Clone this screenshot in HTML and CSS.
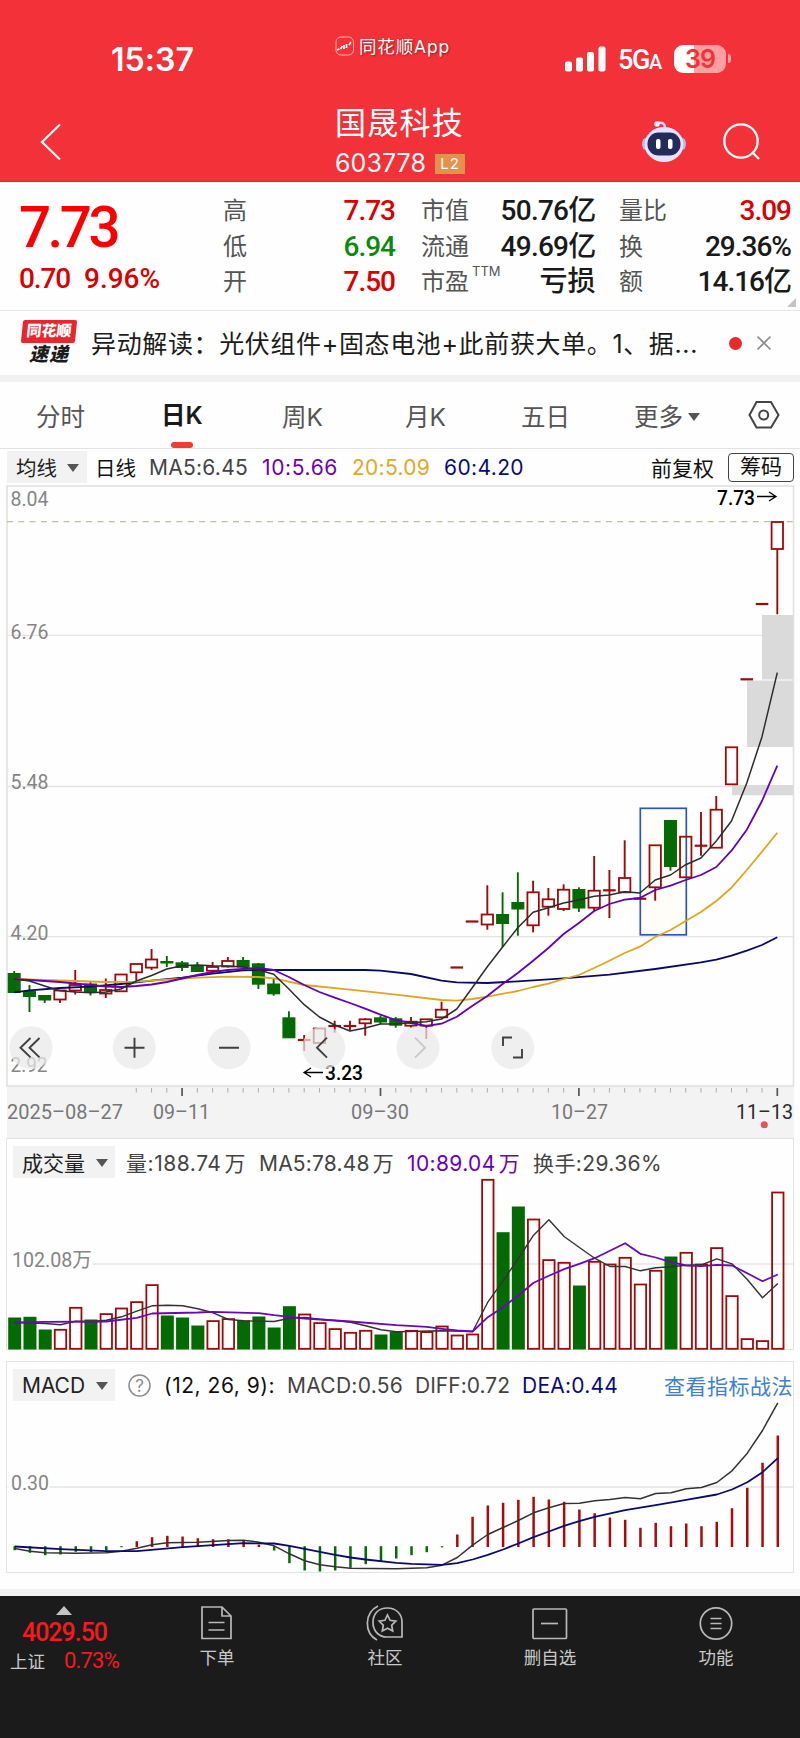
FILE: index.html
```html
<!DOCTYPE html>
<html lang="zh-CN">
<head>
<meta charset="utf-8">
<title>国晟科技 603778</title>
<link rel="stylesheet" href="styles.css">
</head>
<body>
<header class="top">
  <div class="status">
    <span class="time" data-w="83">15:37</span>
    <div class="brand">
      <svg width="20" height="20" viewBox="0 0 20 20" fill="none" stroke="#fff"><rect x="1" y="1" width="17.5" height="18" rx="5" stroke="#ffb3a8"/><path d="M2 14l2.500-1M5.500 13l2-3M9 9v4M11.500 8v4M14 9l2-3" stroke-width="1.700"/></svg>
      <span data-w="91">同花顺App</span>
    </div>
    <svg class="signal" width="41" height="26" viewBox="0 0 41 26" fill="#fff"><rect y="15.500" width="7" height="10" rx="2"/><rect x="11" y="11.500" width="7" height="14" rx="2"/><rect x="22" y="6" width="7" height="19.500" rx="2"/><rect x="33.500" y="0.500" width="7" height="25" rx="2"/></svg>
    <span class="net"><b data-w="31">5G</b><b class="net-a">A</b></span>
    <span class="battery"><b>39</b><i></i></span>
  </div>
  <div class="nav">
    <svg class="back" width="22" height="38" viewBox="0 0 22 38" fill="none" stroke="#fff" stroke-width="2.200"><path d="M20 1.500L2 19l18 17.500"/></svg>
    <div class="title">
      <h1 data-w="129">国晟科技</h1>
      <p><span data-w="91">603778</span><b>L2</b></p>
    </div>
    <svg class="robot" width="46" height="44" viewBox="0 0 46 44"><path d="M17 3c5-1 7 1 7 5" fill="none" stroke="#dcd9ff" stroke-width="2.500"/><circle cx="16" cy="4" r="2.800" fill="#f4efff"/><ellipse cx="4.500" cy="24" rx="3.500" ry="6" fill="#b8b4f5"/><ellipse cx="41.500" cy="24" rx="3.500" ry="6" fill="#b8b4f5"/><ellipse cx="23" cy="24.500" rx="19.500" ry="17.500" fill="#e3e2ff"/><rect x="6.500" y="12.500" width="33" height="23" rx="11" fill="#232b5b"/><rect x="15" y="19" width="4.500" height="10" rx="2" fill="#fff"/><rect x="27" y="19" width="4.500" height="10" rx="2" fill="#fff"/></svg>
    <svg class="search" width="38" height="38" viewBox="0 0 38 38" fill="none" stroke="#fff" stroke-width="2.300"><circle cx="18" cy="18" r="16.700"/><path d="M29 29l7 7"/></svg>
  </div>
</header>

<section class="quote">
  <div class="price"><strong data-w="98">7.73</strong><p><span data-w="51">0.70</span><span data-w="76">9.96%</span></p></div>
  <dl class="c1"><dt>高</dt><dd class="up">7.73</dd><dt>低</dt><dd class="down">6.94</dd><dt>开</dt><dd class="up">7.50</dd></dl>
  <dl class="c2"><dt>市值</dt><dd data-w="95">50.76亿</dd><dt>流通</dt><dd data-w="95">49.69亿</dd><dt class="pe">市盈<sup>TTM</sup></dt><dd data-w="56">亏损</dd></dl>
  <dl class="c3"><dt>量比</dt><dd class="up">3.09</dd><dt>换</dt><dd>29.36%</dd><dt>额</dt><dd>14.16亿</dd></dl>
  <i class="corner"></i>
</section>

<section class="news">
  <div class="badge"><b>同花顺</b><em>速递</em></div>
  <p data-w="607">异动解读：光伏组件+固态电池+此前获大单。1、据...</p>
  <i class="dot"></i>
  <svg width="16" height="16" viewBox="0 0 16 16" stroke="#8a8a8a" stroke-width="1.600"><path d="M1.500 1.500l13 13M14.500 1.500l-13 13"/></svg>
</section>

<nav class="tabs">
  <span class="t1">分时</span><span class="t2">日K</span><span class="t3">周K</span><span class="t4">月K</span><span class="t5">五日</span><span class="t6">更多<i class="tri"></i></span>
  <svg width="32" height="30" viewBox="0 0 32 30" fill="none" stroke="#444" stroke-width="2"><path d="M8.500 2h14.500l7.500 13-7.500 12.500H8.500L1.500 15z"/><circle cx="15.700" cy="15" r="4.500"/></svg>
</nav>

<div class="legend ma">
  <span class="pick p1">均线<i class="tri"></i></span>
  <span class="black name">日线</span>
  <span data-w="99">MA5:6.45</span>
  <span data-w="76" class="violet">10:5.66</span>
  <span data-w="78" class="gold">20:5.09</span>
  <span data-w="80" class="navy">60:4.20</span>
  <span class="black adj">前复权</span><span class="chips">筹码</span>
</div>

<svg id="kline" class="chart" width="800" height="653" viewBox="0 485 800 653"></svg>

<section class="panel volume">
  <div class="legend">
    <span class="pick p2">成交量<i class="tri"></i></span>
    <span data-w="120">量:188.74<i class="thin"></i>万</span><span data-w="135">MA5:78.48<i class="thin"></i>万</span><span data-w="113" class="violet">10:89.04<i class="thin"></i>万</span><span data-w="129">换手:29.36%</span>
  </div>
  <svg id="volume" width="787" height="172" viewBox="6.500 1179.500 787 172"></svg>
</section>

<section class="panel macd">
  <div class="legend">
    <span class="pick p3"><span data-w="63">MACD</span><i class="tri"></i></span>
    <svg class="help" width="23" height="23" viewBox="0 0 23 23"><circle cx="11.500" cy="11.500" r="10.500" fill="none" stroke="#8b8b8b" stroke-width="1.500"/><text x="11.500" y="17.500" text-anchor="middle" font-size="17" fill="#8b8b8b">?</text></svg>
    <span data-w="111" class="black">(12, 26, 9):</span><span data-w="116">MACD:0.56</span><span data-w="95">DIFF:0.72</span><span data-w="96" class="navy">DEA:0.44</span><span class="link" data-w="129">查看指标战法</span>
  </div>
  <svg id="macd" width="787" height="172" viewBox="6.500 1402.500 787 172"></svg>
</section>

<div class="gap"></div>
<footer class="bar">
  <div class="index"><i></i><b data-w="85">4029.50</b><p>上证<span data-w="55">0.73%</span></p></div>
  <div class="item i1"><svg width="34" height="36" viewBox="0 0 34 36"><path d="M2 2h20l9 9v22.500H2zM22 2v9h9M8.500 17.500h16M8.500 25h16"/></svg>下单</div>
  <div class="item i2"><svg width="38" height="36" viewBox="0 0 38 36"><path d="M21.500 3C11 3 7 10 7 17.500S12 32 21 32h15V17C36 9 30 3 21.500 3zM12 1C-2 8-2 28 11 35M21.500 10l2.600 5.300 5.700.8-4.100 4.100 1 5.800-5.200-2.700-5.200 2.700 1-5.800-4.100-4.100 5.700-.8z"/></svg>社区</div>
  <div class="item i3"><svg width="36" height="36" viewBox="0 0 36 36"><rect x="1" y="4" width="33.500" height="29.500" rx="1"/><path d="M9 18.500h17"/></svg>删自选</div>
  <div class="item i4"><svg width="36" height="36" viewBox="0 0 36 36"><circle cx="18" cy="18.500" r="15.700"/><path d="M12.500 13.500h11M12.500 18.500h11M12.500 23.500h11"/></svg>功能</div>
</footer>
<script src="charts.js"></script>
</body>
</html>
```
FILE: styles.css
```css
* { box-sizing: border-box; }
body { margin: 0; width: 800px; background: #fefefe; color: #444; font-family: Inter, "Noto Sans CJK SC", sans-serif; }
h1, p, dl, dt, dd { margin: 0; font-weight: 400; }
svg { display: block; flex: none; }
[data-w] { white-space: nowrap; display: inline-block; flex: none; }

.top { height: 182px; background: #f23238; color: #fff; border-bottom: 1px solid #d0283a; }
.status { height: 98px; padding: 20px 0 0 111px; display: flex; align-items: center; }
.time { width: 83px; font-size: 32px; font-weight: 600; }
.brand { margin: 0 0 27px 141px; width: 230px; display: flex; align-items: center; gap: 4px; font-size: 17.5px; text-shadow: 1px 1px 2px #0006; }
.net { width: 44px; margin-left: 12px; display: flex; align-items: baseline; font: 500 27px Roboto, sans-serif; padding-top: 2px; }
.net b { font-weight: 500; }
.net .net-a { font-size: 20px; }
.battery { margin-left: 12px; width: 52px; height: 28px; border-radius: 9px; background: linear-gradient(90deg, #fff 39%, #ffa0a0 39%); color: #f23238; font-size: 25px; line-height: 28px; text-align: center; position: relative; }
.battery b { font-weight: 600; letter-spacing: -1px; }
.battery i { position: absolute; left: 53.5px; top: 9px; width: 3px; height: 9px; border-radius: 0 4px 4px 0; background: #ffa0a0; }
.nav { height: 83px; display: flex; align-items: flex-start; }
.back { margin: 25px 0 0 40px; }
.title { margin: 5px 0 0 273px; width: 305px; }
.title h1 { font-size: 31px; line-height: 40px; }
.title p { display: flex; align-items: center; height: 39px; font-size: 25px; gap: 9px; }
.title b { width: 30px; height: 20px; margin-top: 2px; background: #e5914b; font-size: 15px; line-height: 20px; font-weight: 400; text-align: center; letter-spacing: 1px; }
.robot { margin: 22px 0 0 1px; }
.search { margin: 25px 0 0 36px; }

.quote { height: 129px; border-bottom: 1px solid #e6e6e6; display: flex; position: relative; }
.price { width: 223px; padding: 15px 0 0 19px; font-family: Roboto, sans-serif; color: #fa0000; }
.price strong { height: 63px; font-size: 56.5px; line-height: 63px; font-weight: 500; }
.price p { height: 36px; display: flex; gap: 14px; font-size: 28px; line-height: 38px; color: #d80000; font-weight: 500; }
.quote dl { display: grid; grid-template-columns: auto 1fr; grid-auto-rows: 35.5px; padding-top: 11px; line-height: 36px; }
.quote dt { font-size: 24px; color: #555; white-space: nowrap; }
.quote dd { justify-self: end; font-family: Roboto, "Noto Sans CJK SC", sans-serif; font-size: 28px; font-weight: 500; letter-spacing: -1px; text-align: right; color: #1a1a1a; white-space: nowrap; }
.quote .up { color: #d80000; }
.quote .down { color: #0c8a0c; }
.c1 { width: 172px; }
.c2 { width: 172px; margin-left: 26px; }
.c3 { width: 172px; margin-left: 26px; }
.pe sup { font-size: 13px; line-height: 0; vertical-align: 14px; margin-left: 3px; letter-spacing: 0; }
.corner { position: absolute; right: 4px; bottom: 3px; border-left: 9px solid transparent; border-bottom: 9px solid #c4c4c4; }

.news { height: 71px; border-bottom: 7px solid #f1f1f1; padding-left: 22px; display: flex; align-items: center; color: #1c1c1c; font-size: 25px; }
.news p { padding-bottom: 3px; }
.badge { width: 54px; height: 46px; margin-right: 15px; text-align: center; }
.badge b { display: block; height: 23px; font-size: 15px; line-height: 22px; font-weight: 900; color: #fff; background: #e8262c; border-radius: 2px; transform: skewX(-6deg); }
.badge em { display: block; font-size: 19px; line-height: 23px; font-weight: 900; letter-spacing: 1px; }
.dot { width: 13px; height: 13px; border-radius: 50%; background: #ee2828; margin: 0 14px 0 31px; }

.tabs { height: 67px; border-bottom: 1px solid #e2e2e2; padding-left: 36px; display: flex; align-items: center; font-size: 24.5px; color: #555; white-space: nowrap; }
.tri { display: inline-block; border: 6px solid transparent; border-top: 8px solid #555; border-bottom: 0; }
.t1 { width: 125px; }
.t2 { width: 121px; height: 66px; line-height: 66px; font-weight: 600; color: #1a1a1a; position: relative; }
.t2::after { content: ""; position: absolute; left: 10px; bottom: 0; width: 22px; height: 6px; border-radius: 3px; background: #f03c32; }
.t3 { width: 123px; }
.t4 { width: 116px; }
.t5 { width: 113px; }
.t6 { width: 114px; }
.t6 .tri { margin-left: 5px; vertical-align: 5px; }

.legend { display: flex; align-items: center; font-size: 21px; color: #444; white-space: nowrap; }
.thin { display: inline-block; width: 3px; }
.pick { display: flex; align-items: center; height: 32px; background: #f2f2f2; color: #222; }
.pick .tri { margin: 2px 0 0 auto; }
.p1 { width: 80px; padding: 0 8px 0 9px; font-size: 20.500px; }
.p2, .p3 { width: 102px; padding: 0 7px 0 9px; }
.black { color: #111; }
.violet { color: #6a00b8; }
.gold { color: #e2a81e; }
.navy { color: #0b0b78; }
.ma { height: 36px; padding: 0 6px 0 7px; gap: 14px; }
.ma .name { margin: 0 -1px 0 -6px; font-size: 20.500px; }
.adj { margin-left: auto; }
.chips { width: 66px; height: 29px; border: 1px solid #444; border-radius: 4px; color: #111; font-size: 21px; line-height: 26px; text-align: center; }

.chart { font-family: Roboto, sans-serif; }
.panel { width: 788px; margin-left: 6px; border: 1.5px solid #e3e3e3; height: 212px; }
.panel svg { overflow: visible; }
.panel .legend { height: 40px; padding: 6px 0 0 6px; gap: 12px; }
.volume .legend { gap: 13px; }
.panel .pick { margin-right: -2px; }
.macd { margin-top: 11px; }
.help { margin: 0 1px 0 3px; }
.link { margin-left: auto; color: #3d80cf; }
.gap { margin-top: 16px; height: 7px; background: #f2f2f2; }

.bar { height: 142px; background: #1b1b1b; display: flex; color: #c9c9c9; font-size: 17.500px; }
.index { width: 176px; padding: 10px 0 0 10px; }
.index i { display: block; width: 0; margin-left: 46px; border: 8px solid transparent; border-bottom: 9px solid #c4c4c4; border-top: 0; }
.index b { display: block; margin: 4px 0 0 12px; font: 500 25px/28px Roboto, sans-serif; color: #f31b1b; }
.index p { line-height: 30px; display: flex; gap: 19px; }
.index p span { font: 400 22px/28px Roboto, sans-serif; color: #f31b1b; }
.item { display: flex; flex-direction: column; align-items: center; padding-top: 9px; line-height: 33px; }
.item svg { fill: none; stroke: #b9b9b9; stroke-width: 1.700; }
.i1 { width: 82px; }
.i2 { width: 82px; margin-left: 86px; }
.i3 { width: 82px; margin-left: 83px; }
.i4 { width: 82px; margin-left: 84px; }
```
FILE: charts.js
```js
const STEP = 15.262, X0 = 14.2, x = i => X0 + i * STEP;
const RED = '#9c0b0b', GREEN = '#046a04';
const rect = (a, b, w, h, attrs) => `<rect x="${a}" y="${b}" width="${w}" height="${h}" ${attrs}/>`;
const seg = (x1, y1, x2, y2, c, w, extra = '') => `<line x1="${x1}" y1="${y1}" x2="${x2}" y2="${y2}" stroke="${c}" stroke-width="${w}" ${extra}/>`;
const label = (s, a, b, w, attrs) => `<text x="${a}" y="${b}" textLength="${w}" lengthAdjust="spacingAndGlyphs" ${attrs}>${s}</text>`;
// A line is given as [index, y] pairs, flattened.
const curve = (d, c, w = 1.8) => {
  let pts = [];
  for (let k = 0; k < d.length; k += 2) pts.push(x(d[k]).toFixed(1) + ',' + d[k + 1]);
  return `<polyline points="${pts.join(' ')}" fill="none" stroke="${c}" stroke-width="${w}" stroke-linejoin="round"/>`;
};
const series = (start, list) => list.flatMap((v, k) => [start + k, v]);
const grid = y => seg(7, y, 793, y, '#e4e4e4', 1.3);

// kind, body top, body bottom, high, low
const candles = [
 'g',973,993,971,993,'g',991,997,985,1012,'g',995,1000.5,995,1003,'r',990.5,999.5,990,1003,'r',985,990.5,970,994.5,
 'g',983.5,992.5,982,995.5,'r',990,993.5,978.5,998,'r',974.5,991.3,974,991,'r',964,972.3,964,980.5,'r',959.5,967.6,949,970,
 'g',961,963.5,956,967,'g',962.3,968,961,971,'g',965,972,962,972,'r',967,970.7,962,973.5,'r',961,966.5,957,967.5,
 'g',960,967.5,957,967,'g',963.3,984.7,963,989,'g',983.5,994.3,978,995.7,'g',1017.3,1038.3,1011.3,1038,'d',1040,1040,1035,1051,
 'r',1028.5,1043,1028,1043,'d',1026,1026,1020.7,1032.7,'d',1026,1026,1020.7,1030.5,'r',1019.3,1023.3,1018,1035.7,'g',1017.3,1022.5,1015.5,1024,
 'g',1018.3,1025.7,1017,1027.7,'r',1021.7,1025.7,1017,1027.7,'r',1019.3,1025.7,1019,1039,'r',1009.7,1017.3,1001.7,1018,'d',967.5,967.5,967,968,
 'd',921.5,921.5,921,922,'r',914.5,924.5,885.3,929.7,'g',914,924,892.3,947,'g',902,909.5,872.3,935.7,'r',892.3,925.3,880.7,932.3,
 'r',899.3,906.7,888,915.7,'r',889.7,909,884.3,911,'g',889,908.5,887.3,912,'r',890.7,907.7,856,911.7,'d',890.3,890.3,870,918,
 'r',878,892.3,840.3,892,'d',898.7,898.7,898,899,'r',845.3,887.3,845,900.7,'g',820,867,820,870.7,'r',836.7,877.3,836,877,
 'd',845.7,845.7,812,855.7,'r',809.7,847.7,796,848,'r',747.3,784.3,747,784,'d',679.3,679.3,679,680,'d',604,604,603.5,604.5,'r',522,549,522,614.3];

function drawKline() {
  let s = rect(7, 1086, 787, 52, 'fill="#f3f3f3"') + rect(7, 486, 786.5, 600, 'fill="#fefefe" stroke="#e0e0e0" stroke-width="1.5"');
  s += [635.3, 786.5, 936.7].map(grid).join('');
  s += seg(7, 521.7, 793, 521.7, '#bfbfa0', 1.2, 'stroke-dasharray="6 5.3"');
  s += rect(762, 615, 31, 64.5, 'fill="#dadada"') + rect(747, 680.5, 46, 66.5, 'fill="#dadada"') + rect(732, 785, 61, 10.3, 'fill="#dadada"');
  s += rect(640.3, 808.3, 46, 126.5, 'fill="#fefdf8" stroke="#2a56b5" stroke-width="1.7"');
  const axis = 'font-size="20" fill="#858585"';
  s += label('8.04', 10.5, 506, 38, axis) + label('6.76', 10.5, 638.5, 38, axis) + label('5.48', 10.5, 789, 38, axis) + label('4.20', 10.5, 940, 38, axis) + label('2.92', 10.5, 1072, 37, axis);
  for (let i = 0; i < 51; i++) {
    const [k, t, b, h, l] = candles.slice(i * 5, i * 5 + 5), cx = x(i), c = k === 'g' ? GREEN : RED;
    if (k === 'g') s += rect(cx - 6.5, t, 13, b - t, `fill="${c}"`) + seg(cx, h, cx, l, c, 1.9);
    else if (k === 'd') s += seg(cx - 6.3, t, cx + 6.3, t, c, 2.2) + seg(cx, h, cx, l, c, 1.9);
    else {
      s += seg(cx, h, cx, t, c, 1.9) + seg(cx, b, cx, l, c, 1.9);
      s += rect(cx - 5.7, t, 11.4, b - t, `fill="none" stroke="${c}" stroke-width="1.8"`);
    }
  }
  s += curve([0,992.3,1,990.3,3,988,5,986.7,7,984,9,980.7,11,977.7,13,973.7,15,970.3,17,970,23,970,24,970.7,26,974,28,980.7,29,982.3,31,983,33,981.3,36,978.3,39,974.7,42,969,45,962.3,46,959.7,47,955.7,48,950.7,49,945,50,937.3], '#0a0a62');
  s += curve([0,979,4,981,6,982,8,981.7,10,979.7,12,977.7,14,976.7,16,977,17,978.3,19,985,22,989.7,25,994.7,28,1000,29,1000.7,30,999,31,996.7,33,991,34,987,35,983.7,36,979,37,975,38,968,39,960.7,40,953,41,946.7,42,937,43,930,44,921,45,912,46,901,47,887.7,48,870,49,851.7,50,832.7], '#e0a51e');
  s += curve(series(0, [979,980,981,982,983.5,985,986.5,987,986,984.5,982,978.5,975,972,970,969,968,970,977,985,992,997.7,1003,1008.7,1014.7,1020,1023,1026,1023.7,1016.7,1006,996,984,973,960.7,948,934,923,911,904,899.7,898,890,885.7,880,875,867,850.7,829.7,801,765.7]), '#6202b4');
  s += curve(series(0, [979,981,986,990.7,992,992.7,992,989,981,975.5,969,965.7,965,965.7,966,967,970,974.3,989,1004.7,1017,1025,1031,1028,1024,1024,1022.7,1021.7,1019,1009,988,966.7,947,927.7,912.3,907.7,903,900,896.3,895,891.7,893,880,875,864.7,858,841,821,783,736.7,672.7]), '#2c2c2c', 1.5);
  const note = 'font-size="20" font-weight="500" fill="#000"';
  s += label('7.73', 717, 505, 38, note) + '<path d="M757 496.500h18M769 492l7 4.500-7 4.500" fill="none" stroke="#000" stroke-width="1.300"/>';
  s += label('3.23', 325, 1080, 38, note) + '<path d="M323 1072.500h-18M311 1068l-7 4.500 7 4.500" fill="none" stroke="#000" stroke-width="1.300"/>';
  // Zoom and pan controls.
  for (const cx of [31, 134.3, 229, 323.7, 418, 512.7]) s += `<circle cx="${cx}" cy="1047.700" r="21.500" fill="#e9e9e9" fill-opacity=".72"/>`;
  s += '<g fill="none" stroke="#3f3f3f" stroke-width="1.900"><path d="M30.500 1038l-10 9.700 10 9.700M39.500 1038l-10 9.700 10 9.700M124.500 1047.700h20M134.500 1037.700v20M219 1047.700h20M327 1037.700l-10 10 10 10M503 1046v-8.500h9M522 1049v8.500h-9"/><path d="M415 1037.700l10 10-10 10" stroke="#c8c8c8"/></g>';
  for (let i = 8; i < 51; i++) s += (i === 11 || i === 24 || i === 37 || i === 50) ? seg(x(i), 1088, x(i), 1096, '#555', 1.7) : seg(x(i), 1088, x(i), 1092.5, '#aaa', 1);
  const day = 'font-size="20.500" fill="#777"';
  s += label('2025–08–27', 7, 1119, 116, day) + label('09–11', 153, 1119, 57, day) + label('09–30', 351, 1119, 58, day) + label('10–27', 551, 1119, 57, day) + label('11–13', 736, 1119, 57, 'font-size="20.500" fill="#2a2a2a"');
  s += '<circle cx="764.300" cy="1124.700" r="3.500" fill="#e8505b"/>';
  document.getElementById('kline').innerHTML = s;
}

const volTop = [1318,1317.3,1330,1330,1308,1320,1314.3,1308.7,1302.3,1285.3,1316,1318,1326,1321.3,1319.3,1321,1317,1328,1306.7,1314.7,1323.3,1329.3,1333,1331,1335,1332.3,1331,1332.3,1326.7,1335.7,1334.7,1180,1232.7,1207,1219.7,1260.3,1263,1286,1262,1264.7,1258,1284.7,1271,1257,1253,1264.7,1248.3,1296.3,1339.3,1341.3,1192.7];
const volGreen = new Set([0,1,2,5,10,11,12,15,16,17,18,24,25,32,33,37,43]);
function drawVolume() {
  let s = grid(1264.5);
  s += '<rect x="8" y="1250" width="84" height="20" fill="#fefefe"/>' + label('102.08万', 11.5, 1267, 80, 'font-size="20.500" fill="#858585" font-family="Roboto, \'Noto Sans CJK SC\'"');
  volTop.forEach((t, i) => {
    s += volGreen.has(i) ? rect(x(i) - 6.5, t, 13, 1350 - t, `fill="${GREEN}"`) : rect(x(i) - 5.7, t + .3, 11.4, 1349 - t, `fill="none" stroke="${RED}" stroke-width="1.8"`);
  });
  s += curve([0,1323,2,1324,3,1325.3,4,1321.7,5,1322,6,1320.7,7,1317.3,8,1311.7,9,1306.3,10,1305.7,11,1306.3,12,1309.3,13,1313.3,14,1320,15,1321.3,17,1322,18,1318.7,19,1318,20,1319.7,21,1321,22,1322.7,23,1326.3,24,1330.3,25,1332.3,28,1331.3,30,1332,31,1302.7,32,1281.3,33,1259,34,1235.7,35,1220.3,36,1237,37,1248,38,1258.7,39,1267,40,1267,41,1271.3,42,1268.3,43,1267.3,44,1265.7,45,1265.3,46,1259.3,47,1264.3,48,1280,49,1298.3,50,1284], '#333', 1.4);
  s += curve([0,1323,2,1322.3,6,1322,8,1318.3,9,1314,12,1313,13,1312.3,16,1313.7,17,1315.7,18,1317.3,19,1319,22,1322,25,1325.7,27,1327.3,28,1329.3,29,1331,30,1332,31,1317.7,32,1307.7,33,1296,34,1283.3,35,1276.3,36,1269.7,37,1264.3,38,1258.7,39,1251.3,40,1243.7,41,1254.3,42,1258,43,1262.7,44,1266,45,1266.7,46,1265.3,47,1266,48,1273.7,49,1281.7,50,1275], '#6a08b5');
  document.getElementById('volume').innerHTML = s;
}

const macdEnd = [1550.7,1553.3,1555.7,1555,1552.3,1552.7,1551,1547.7,1541.7,1537.7,1536.3,1537,1538.7,1539.7,1539.7,1541,1545.3,1551,1563.7,1571,1572,1571,1568.3,1564.7,1561.7,1559,1555.7,1552.7,1547.9,1535,1517.3,1506,1503.3,1500.3,1497.3,1500,1502.3,1510,1513.7,1518,1520.3,1528.3,1523.3,1526.7,1524,1526.7,1522.3,1508.7,1488.3,1463.3,1436];
function drawMacd() {
  let s = grid(1487.5) + '<rect x="8" y="1474" width="41" height="18" fill="#fefefe"/>' + label('0.30', 10.5, 1490.5, 38, 'font-size="20.500" fill="#858585" font-family="Roboto"');
  macdEnd.forEach((e, i) => { s += e > 1547 ? seg(x(i), 1546.7, x(i), e, GREEN, 2.5) : seg(x(i), 1547.5, x(i), e, '#a90b0b', 2.5); });
  s += curve([0,1549,1,1551.7,2,1553.3,4,1553.7,6,1553.3,7,1551.7,8,1548.7,9,1545.3,10,1543.3,12,1542.7,14,1541,15,1540.7,16,1542.7,17,1546.3,18,1554.3,19,1561.3,20,1565.3,21,1567.3,22,1568.7,25,1569.3,27,1568.3,28,1565.7,29,1558,30,1545.7,31,1535,32,1528,33,1521,34,1513.3,35,1508.3,36,1504,37,1503.7,38,1501.3,39,1500,40,1498,41,1499.3,42,1494,43,1493.3,44,1489.3,45,1488,46,1483,47,1471.3,48,1453.7,49,1431,50,1403.3], '#333', 1.5);
  s += curve([0,1547,3,1549.7,6,1551.7,8,1551.7,11,1547.7,13,1545.7,15,1543.7,17,1544,18,1546.3,19,1549.3,20,1552.3,21,1555.3,22,1558,23,1560,25,1563.3,26,1564.3,28,1565.3,29,1563.7,30,1560,31,1555.3,32,1550,33,1544,34,1537.7,35,1532,36,1526.3,37,1521.7,38,1517.3,40,1510.7,42,1505.7,44,1500.3,46,1495,47,1490,48,1482.7,49,1472.7,50,1458.7], '#0a0a70');
  document.getElementById('macd').innerHTML = s;
}

// Tighten each label so that it fills its slot exactly.
function fitLabels() {
  document.querySelectorAll('[data-w]').forEach(el => {
    el.style.letterSpacing = '0px';
    const range = document.createRange();
    range.selectNodeContents(el);
    const natural = range.getBoundingClientRect().width;
    el.style.letterSpacing = ((el.dataset.w - natural) / el.textContent.length).toFixed(3) + 'px';
  });
}

drawKline();
drawVolume();
drawMacd();
fitLabels();
```
